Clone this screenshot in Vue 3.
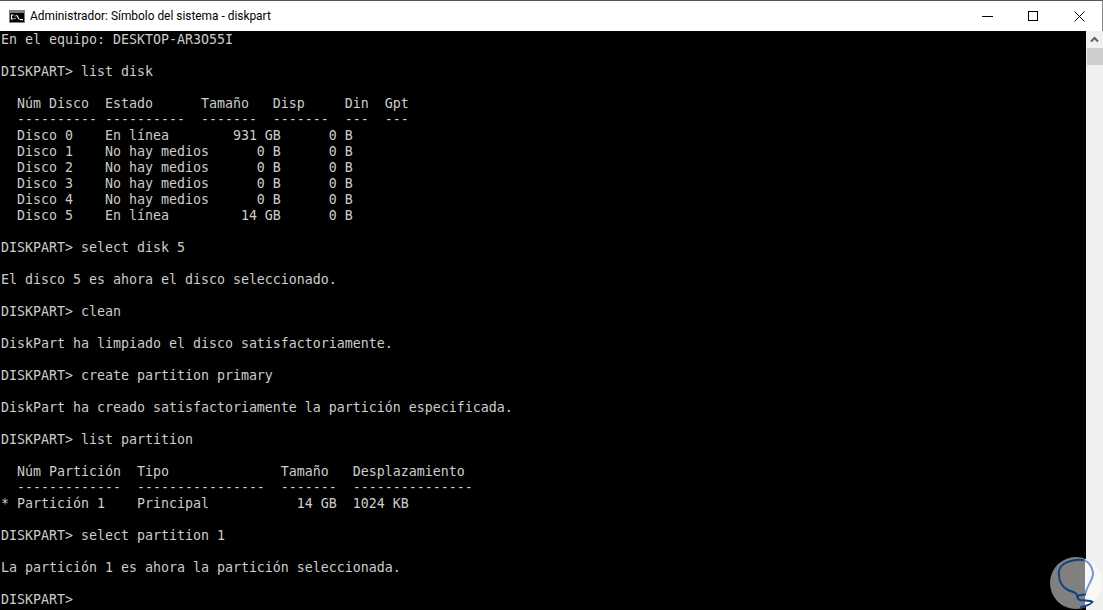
<script setup>
const lines = [
  'En el equipo: DESKTOP-AR3O55I',
  '',
  'DISKPART> list disk',
  '',
  '  Núm Disco  Estado      Tamaño   Disp     Din  Gpt',
  '  ---------- ----------  -------  -------  ---  ---',
  '  Disco 0    En línea        931 GB      0 B',
  '  Disco 1    No hay medios      0 B      0 B',
  '  Disco 2    No hay medios      0 B      0 B',
  '  Disco 3    No hay medios      0 B      0 B',
  '  Disco 4    No hay medios      0 B      0 B',
  '  Disco 5    En línea         14 GB      0 B',
  '',
  'DISKPART> select disk 5',
  '',
  'El disco 5 es ahora el disco seleccionado.',
  '',
  'DISKPART> clean',
  '',
  'DiskPart ha limpiado el disco satisfactoriamente.',
  '',
  'DISKPART> create partition primary',
  '',
  'DiskPart ha creado satisfactoriamente la partición especificada.',
  '',
  'DISKPART> list partition',
  '',
  '  Núm Partición  Tipo              Tamaño   Desplazamiento',
  '  -------------  ----------------  -------  ---------------',
  '* Partición 1    Principal           14 GB  1024 KB',
  '',
  'DISKPART> select partition 1',
  '',
  'La partición 1 es ahora la partición seleccionada.',
  '',
  'DISKPART>'
]
</script>

<template>
  <div class="window">
    <header class="titlebar">
      <svg class="appicon" width="16" height="13" viewBox="0 0 16 13">
        <rect x="0" y="0" width="16" height="13" fill="#808080" />
        <rect x="1" y="3" width="14" height="9" fill="#000" />
        <path d="M4.5 5H2.5V9H4.5M6 5.5V6.5M6 8V9M7.5 5L10 9" stroke="#fff" stroke-width="1.2" fill="none" />
        <rect x="10.5" y="9" width="3.5" height="1.2" fill="#fff" />
      </svg>
      <span class="title">Administrador: Símbolo del sistema - diskpart</span>
      <div class="controls">
        <div class="ctl">
          <svg width="11" height="11" viewBox="0 0 11 11"><path d="M0 5.5H11" stroke="#000" /></svg>
        </div>
        <div class="ctl">
          <svg width="11" height="11" viewBox="0 0 11 11"><rect x="0.5" y="0.5" width="9" height="9" fill="none" stroke="#000" /></svg>
        </div>
        <div class="ctl">
          <svg width="11" height="11" viewBox="0 0 11 11"><path d="M0.5 0.5L10.5 10.5M10.5 0.5L0.5 10.5" stroke="#000" /></svg>
        </div>
      </div>
    </header>
    <div class="body">
      <pre class="console"><div v-for="(l, i) in lines" :key="i" class="line">{{ l }}</div></pre>
      <aside class="scrollbar">
        <div class="arrow">
          <svg width="9" height="7" viewBox="0 0 9 7"><path d="M1 5.5L4.5 2L8 5.5" stroke="#606060" stroke-width="2" fill="none" /></svg>
        </div>
        <div class="thumb"></div>
      </aside>
    </div>
    <div class="badge">
      <svg width="52" height="52" viewBox="0 0 52 52">
        <path d="M35 3.6C31 2.6 27 2.6 23 3.4C14 5 8.5 10 8.8 17C9 24 12 30 18 33C22 35 26 35 27 38C27.5 41 27 42 30 43C34 44 40 43 42.5 45C41 48 36 49 31 50" fill="none" stroke="#0f4283" stroke-width="2" stroke-linecap="round" />
        <path d="M35 3.6C39 5 42.5 10 43 16C43.3 22 38 28 36.5 33C36 35 35.5 36 35 37.5" fill="none" stroke="#6f9acb" stroke-width="2" stroke-linecap="round" />
        <path d="M35 37.5C32 38.5 28 37 27.5 39.5" fill="none" stroke="#0f4283" stroke-width="2" stroke-linecap="round" />
        <path d="M43 45L45 47M45 44L46 47L48 44.5" fill="none" stroke="#8a8a8a" stroke-width="1" />
      </svg>
    </div>
  </div>
</template>

<style>
html, body { margin: 0; background: #000; }
</style>

<style scoped>
.window {
  width: 1103px;
  height: 610px;
  display: flex;
  flex-direction: column;
  background: #000;
  overflow: hidden;
  position: relative;
}
.titlebar {
  height: 31px;
  flex: none;
  box-sizing: border-box;
  background: #fff;
  display: flex;
  align-items: center;
  padding-left: 9px;
  border-top: 1px solid #555;
  border-right: 1px solid #888;
}
.appicon { flex: none; margin-right: 5px; }
.title {
  font-family: Roboto, "Noto Sans", sans-serif;
  font-size: 11.9px;
  color: #000;
  white-space: nowrap;
}
.controls { margin-left: auto; display: flex; align-items: center; }
.ctl {
  width: 46px;
  height: 29px;
  display: flex;
  align-items: center;
  justify-content: center;
}
.body { flex: 1; display: flex; min-height: 0; }
.console {
  flex: 1;
  margin: 0;
  padding: 1px 0 0 1px;
  font-family: "DejaVu Sans Mono", monospace;
  font-size: 13.29px;
  line-height: 16px;
  color: #cccccc;
  background: #000;
}
.line { height: 16px; white-space: pre; }
.scrollbar {
  width: 17px;
  background: #f0f0f0;
  flex: none;
}
.arrow {
  height: 17px;
  display: flex;
  align-items: center;
  justify-content: center;
}
.thumb { height: 17px; margin-left: 1px; background: #cdcdcd; }
.badge {
  position: absolute;
  left: 1050px;
  top: 557px;
  width: 52px;
  height: 52px;
  border-radius: 50%;
  background: linear-gradient(90deg, #808080 0 35px, #f8f8f8 35px);
  overflow: hidden;
}
</style>
